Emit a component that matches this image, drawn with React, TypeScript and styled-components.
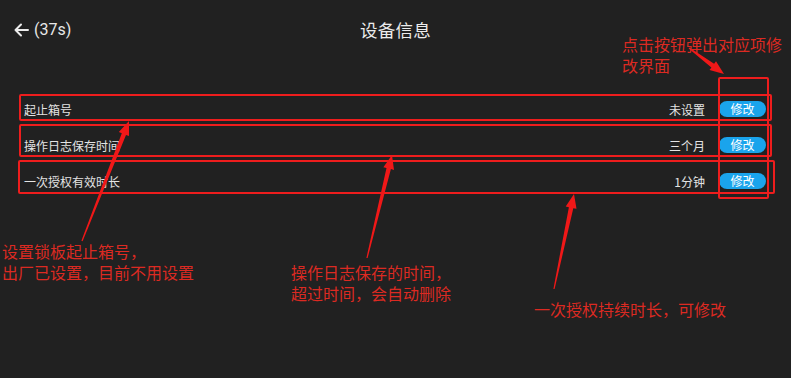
import React from "react";
import styled, { createGlobalStyle } from "styled-components";

const Global = createGlobalStyle`
  html, body { margin: 0; padding: 0; background: #212121; }
  body { width: 791px; height: 378px; overflow: hidden; }
`;

const Page = styled.div`
  position: relative;
  width: 791px;
  height: 378px;
  background: #212121;
  font-family: "Noto Sans CJK SC", "Noto Sans", sans-serif;
  color: #e6e6e6;
  overflow: hidden;
`;

const Header = styled.div`
  position: relative;
  height: 58px;
  display: flex;
  align-items: center;
  padding-left: 14px;
`;

const Back = styled.div`
  display: flex;
  align-items: center;
  gap: 5px;
  font-family: Roboto, "Liberation Sans", sans-serif;
  font-size: 16px;
  color: #e8e8e8;
  margin-top: 1px;
`;

const Title = styled.div`
  position: absolute;
  left: 0;
  right: 0;
  top: 0;
  height: 58px;
  display: flex;
  align-items: center;
  justify-content: center;
  font-size: 17.5px;
  color: #ececec;
  pointer-events: none;
  letter-spacing: 0.3px;
`;

const List = styled.div`
  display: flex;
  flex-direction: column;
  margin-top: 33px;
  padding: 0 25px 0 24px;
`;

const Row = styled.div`
  height: 36px;
  display: flex;
  align-items: center;
`;

const Label = styled.div`
  flex: 1;
  font-size: 12px;
  color: #e4e4e4;
`;

const Value = styled.div`
  font-size: 12px;
  color: #e4e4e4;
  margin-right: 14px;
`;

const EditButton = styled.button`
  width: 47px;
  height: 16px;
  border: none;
  border-radius: 8px;
  background: #1aa4ec;
  color: #ffffff;
  font-family: "Noto Sans CJK SC", sans-serif;
  font-size: 12px;
  line-height: 16px;
  padding: 0;
`;

const Frame = styled.div<{ $x: number; $y: number; $w: number; $h: number }>`
  position: absolute;
  left: ${(p) => p.$x}px;
  top: ${(p) => p.$y}px;
  width: ${(p) => p.$w}px;
  height: ${(p) => p.$h}px;
  border: 2px solid #ee1d1d;
  border-radius: 2px;
  box-sizing: border-box;
  pointer-events: none;
`;

const Note = styled.div<{ $x: number; $y: number }>`
  position: absolute;
  left: ${(p) => p.$x}px;
  top: ${(p) => p.$y}px;
  font-size: 16px;
  line-height: 21px;
  color: #dc2a22;
  white-space: nowrap;
`;

const Overlay = styled.svg`
  position: absolute;
  left: 0;
  top: 0;
  width: 791px;
  height: 378px;
  pointer-events: none;
`;

type P = [number, number];

function arrowPoints(tail: P, tip: P, headLen = 14, headW = 11, shaftW = 4.5): string {
  const dx = tip[0] - tail[0];
  const dy = tip[1] - tail[1];
  const len = Math.hypot(dx, dy);
  const ux = dx / len;
  const uy = dy / len;
  const nx = -uy;
  const ny = ux;
  const bx = tip[0] - ux * headLen;
  const by = tip[1] - uy * headLen;
  const pts: P[] = [
    [tail[0] + nx * 0.6, tail[1] + ny * 0.6],
    [bx + nx * shaftW / 2, by + ny * shaftW / 2],
    [bx + nx * headW / 2, by + ny * headW / 2],
    tip,
    [bx - nx * headW / 2, by - ny * headW / 2],
    [bx - nx * shaftW / 2, by - ny * shaftW / 2],
    [tail[0] - nx * 0.6, tail[1] - ny * 0.6],
  ];
  return pts.map((p) => `${p[0].toFixed(1)},${p[1].toFixed(1)}`).join(" ");
}

const rows = [
  { label: "起止箱号", value: "未设置" },
  { label: "操作日志保存时间", value: "三个月" },
  { label: "一次授权有效时长", value: "1分钟" },
];

const arrows: { tail: P; tip: P }[] = [
  { tail: [689, 48], tip: [724, 74] },
  { tail: [82, 241], tip: [129, 121] },
  { tail: [367, 258], tip: [392, 155] },
  { tail: [554, 289], tip: [574, 194] },
];

export default function App() {
  return (
    <Page>
      <Global />
      <Header>
        <Back>
          <svg width="15" height="14" viewBox="0 0 15 14">
            <path d="M7 1.5 L1.5 7 L7 12.5 M1.5 7 H14" stroke="#ececec" strokeWidth="2" fill="none" strokeLinecap="round" strokeLinejoin="round" />
          </svg>
          <span>(37s)</span>
        </Back>
        <Title>设备信息</Title>
      </Header>
      <List>
        {rows.map((r) => (
          <Row key={r.label}>
            <Label>{r.label}</Label>
            <Value>{r.value}</Value>
            <EditButton>修改</EditButton>
          </Row>
        ))}
      </List>

      <Frame $x={19} $y={94} $w={753} $h={27} />
      <Frame $x={19} $y={124} $w={753} $h={33} />
      <Frame $x={18} $y={160} $w={757} $h={34} />
      <Frame $x={718} $y={77} $w={51} $h={122} />

      <Overlay viewBox="0 0 791 378">
        {arrows.map((a, i) => (
          <polygon key={i} points={arrowPoints(a.tail, a.tip)} fill="#f01818" />
        ))}
      </Overlay>

      <Note $x={622} $y={34}>
        点击按钮弹出对应项修
        <br />
        改界面
      </Note>
      <Note $x={2} $y={241}>
        设置锁板起止箱号，
        <br />
        出厂已设置，目前不用设置
      </Note>
      <Note $x={291} $y={262}>
        操作日志保存的时间，
        <br />
        超过时间，会自动删除
      </Note>
      <Note $x={534} $y={299}>一次授权持续时长，可修改</Note>
    </Page>
  );
}
